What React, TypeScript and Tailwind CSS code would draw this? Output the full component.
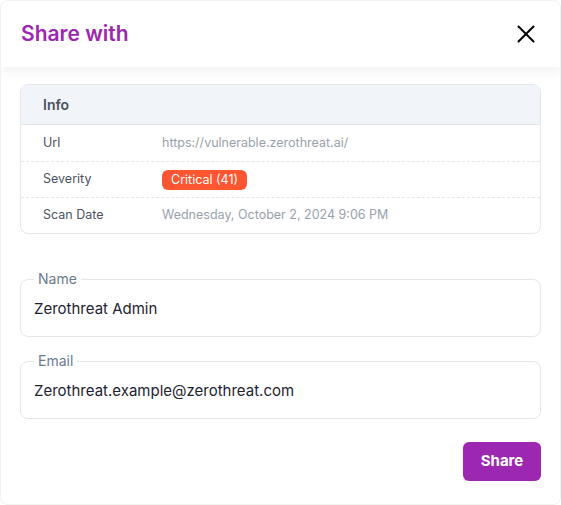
import { X } from "lucide-react";

const rows = [
  { label: "Url", value: "https://vulnerable.zerothreat.ai/" },
  { label: "Severity", badge: "Critical (41)" },
  { label: "Scan Date", value: "Wednesday, October 2, 2024 9:06 PM" },
];

const Field = ({ label, value }: { label: string; value: string }) => (
  <div className="relative flex h-[58px] items-center rounded-lg border border-[#e3e6ea] px-[13px] pt-[3px]">
    <span className="absolute -top-[10px] left-[13px] bg-white px-1 text-[14px] leading-[18px] text-[#6b7a8f]">
      {label}
    </span>
    <span className="text-[15px] text-[#1d2330]">{value}</span>
  </div>
);

export default function App() {
  return (
    <div className="h-[505px] w-full overflow-hidden rounded-lg border border-[#f2f2f2] bg-white font-['Inter',sans-serif]">
      {/* Header */}
      <div className="relative z-10 flex h-[66px] items-center justify-between bg-white pl-[20px] pr-[19px] shadow-[0_6px_12px_rgba(0,0,0,0.05)]">
        <h2 className="text-[21px] font-semibold text-[#9c27b0]">Share with</h2>
        <button className="text-black">
          <X size={30} strokeWidth={1.6} />
        </button>
      </div>

      <div className="px-[19px] pt-[17px]">
        {/* Info card */}
        <div className="overflow-hidden rounded-lg border border-[#e3e6ea]">
          <div className="flex h-[40px] items-center border-b border-[#e3e6ea] bg-[#f1f4f8] px-[22px] text-[14px] font-semibold text-[#4a5262]">
            Info
          </div>
          {rows.map((r, i) => (
            <div
              key={r.label}
              className={`flex h-[36px] items-center px-[22px] text-[12.5px] ${
                i > 0 ? "border-t border-dashed border-[#e3e6ea]" : ""
              }`}
            >
              <div className="w-[119px] text-[#4a5262]">{r.label}</div>
              {r.badge ? (
                <span className="rounded-md bg-[#ff5530] px-[9px] py-[1px] text-[12.5px] leading-[18px] text-white">
                  {r.badge}
                </span>
              ) : (
                <div className="text-[#9aa1ad]">{r.value}</div>
              )}
            </div>
          ))}
        </div>

        {/* Fields */}
        <div className="mt-[45px] flex flex-col gap-6">
          <Field label="Name" value="Zerothreat Admin" />
          <Field label="Email" value="Zerothreat.example@zerothreat.com" />
        </div>

        <div className="mt-[23px] flex justify-end">
          <button className="h-[39px] w-[78px] rounded-md bg-[#9c27b0] text-[15px] font-bold text-white">
            Share
          </button>
        </div>
      </div>
    </div>
  );
}
